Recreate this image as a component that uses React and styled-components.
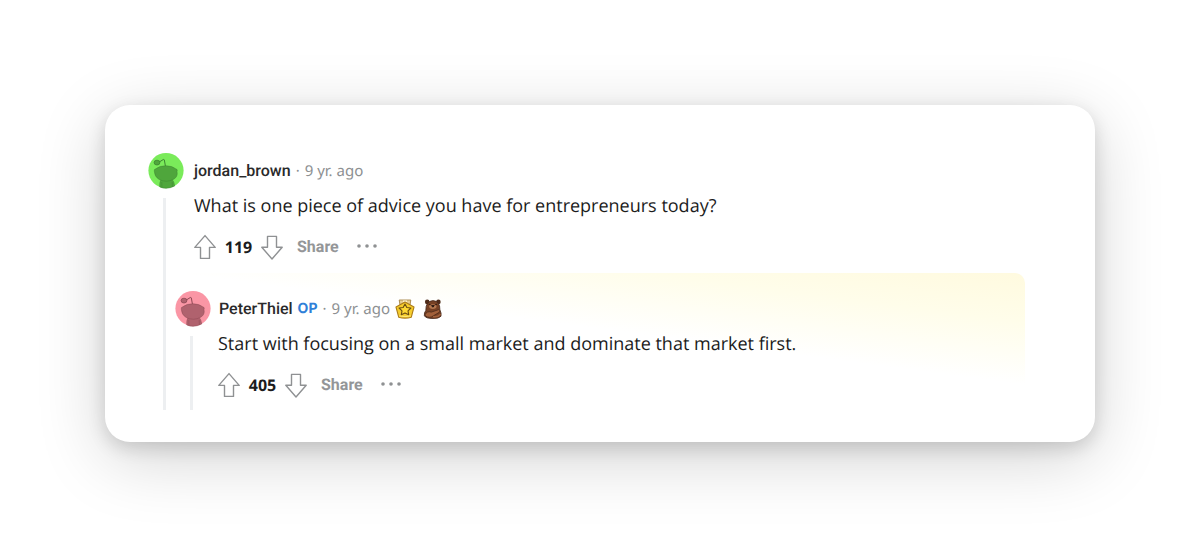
import React from 'react';
import styled, { createGlobalStyle } from 'styled-components';

const GlobalStyle = createGlobalStyle`
  * {
    box-sizing: border-box;
  }

  body {
    margin: 0;
    background-color: #fff;
    font-family: "Open Sans", "Noto Sans", sans-serif;
    text-rendering: geometricPrecision;
  }

  button {
    text-rendering: inherit;
  }
`;

const Page = styled.main`
  padding: 105px;
`;

const Card = styled.section`
  padding: 48px 70px 32px 43px;
  border-radius: 25px;
  background-color: #fff;
  box-shadow: 0 16px 68px rgba(0, 0, 0, 0.18), 0 6px 18px rgba(0, 0, 0, 0.14);
`;

const CommentBox = styled.article`
  ${({ $highlighted }) => $highlighted && `
    margin-top: 10px;
    padding-top: 18px;
    border-radius: 0 10px 0 0;
    background: linear-gradient(to top right, rgba(255, 255, 255, 0) 50%, #fffdea 78%, #fffadf) no-repeat;
    background-size: 100% 112px;
  `}
`;

const CommentHeader = styled.header`
  display: flex;
  align-items: center;
  gap: ${({ $nested }) => ($nested ? '8px' : '10px')};
`;

const Avatar = styled.svg`
  flex: none;
  width: 36px;
  height: 36px;
`;

const Meta = styled.div`
  display: flex;
  align-items: center;
  gap: 5px;
  font-family: "Noto Sans", sans-serif;
  font-size: 15px;
  line-height: 20px;
  color: #8d9092;
`;

const Username = styled.a`
  font-family: "Roboto", sans-serif;
  font-size: 16px;
  font-weight: 500;
  color: #2a2a2b;
  text-decoration: none;
`;

const OpTag = styled.span`
  font-family: "Inter", sans-serif;
  font-size: 14px;
  font-weight: 700;
  color: #2f80d8;
`;

const Award = styled.svg`
  width: 20px;
  height: 20px;
  margin-right: 3px;
`;

const CommentBody = styled.div`
  display: flex;
`;

const Rail = styled.div`
  flex: none;
  width: 27px;
  padding: 9px 0 0 15px;

  &::before {
    content: '';
    display: block;
    width: 3px;
    height: 100%;
    background-color: #edeff1;
  }
`;

const Content = styled.div`
  flex: 1;
  min-width: 0;
`;

const Inset = styled.div`
  padding: 4px 0 0 ${({ $nested }) => ($nested ? '16px' : '19px')};
`;

const Text = styled.p`
  margin: 0;
  font-size: 18px;
  line-height: 26px;
  color: #1c1c1c;
`;

const Actions = styled.div`
  display: flex;
  align-items: center;
  height: 32px;
  margin-top: 12px;
  margin-bottom: ${({ $nested }) => ($nested ? '9px' : '0')};
`;

const VoteButton = styled.button`
  display: flex;
  padding: 0;
  border: 0;
  background: none;
  color: #8f9193;
  cursor: pointer;

  svg {
    width: 22px;
    height: 26px;
  }
`;

const Score = styled.span`
  min-width: 45px;
  font-family: "Noto Sans", sans-serif;
  font-size: 16px;
  font-weight: 700;
  line-height: 20px;
  text-align: center;
  color: #1c1c1c;
`;

const ShareButton = styled.button`
  margin-left: 14px;
  padding: 0;
  border: 0;
  background: none;
  font-family: "Roboto", sans-serif;
  font-size: 16px;
  font-weight: 700;
  line-height: 20px;
  color: #949698;
  cursor: pointer;
`;

const MoreButton = styled(VoteButton)`
  margin-left: 18px;

  svg {
    width: 20px;
    height: 20px;
  }
`;

const avatarColors = {
  green: { back: '#7aeb5a', body: '#4fa63c', line: '#3c8430' },
  pink: { back: '#fa96a5', body: '#b0626e', line: '#8c4853' },
};

const Snoo = ({ tone }) => {
  const { back, body, line } = avatarColors[tone];
  return (
    <Avatar viewBox="0 0 36 36" aria-hidden="true">
      <circle cx="18" cy="17.6" r="17.6" fill={back} />
      <path d="M17.4 13 L16.3 6.8 Q16 6.2 15.2 6.6 L11 9.2" fill="none" stroke={line} strokeWidth="1" />
      <ellipse cx="9" cy="9.6" rx="2.9" ry="2.4" fill={body} stroke={line} strokeWidth="0.8" />
      <path d="M13 26.5 Q18 28.5 24 26.2 Q26.2 28.5 26.7 33 Q18.5 37 11.8 34 Q11.3 29.5 13 26.5Z" fill={body} stroke={line} strokeWidth="0.5" />
      <path d="M13.8 29 L13.9 34.5 M24.2 29 L24.4 34" stroke={line} strokeWidth="0.5" />
      <path d="M6.3 18.2 Q5.8 16.2 7.8 15.8 Q11.5 12.7 18 12.8 Q24.3 12.9 27.6 15.7 Q30 16.2 29 18.6 Q30.1 23.8 25.7 26.2 Q18.5 30.2 10.7 26.3 Q6.6 23.6 6.3 18.2Z" fill={body} stroke={line} strokeWidth="0.5" />
    </Avatar>
  );
};

const StarAward = () => (
  <Award viewBox="0 0 20 20" role="img" aria-label="Star award">
    <path d="M4.2 1 H15.8 L15 6 H5Z" fill="#e8cf94" stroke="#a58346" strokeWidth="0.9" />
    <path d="M8 2.2 H12" stroke="#fff6d8" strokeWidth="1.4" />
    <path d="M10 3 L19 8 L16.3 18.2 Q10 20 3.7 18.2 L1 8Z" fill="#f6cd2c" stroke="#ac7c19" strokeWidth="1.1" strokeLinejoin="round" />
    <path d="M4.4 16.8 Q10 18.5 15.6 16.8" fill="none" stroke="#ffe97c" strokeWidth="1" />
    <path d="M10 5 L11.8 8.5 L15.9 9 L13 11.8 L13.7 15.7 L10 13.9 L6.3 15.7 L7 11.8 L4.1 9 L8.2 8.5Z" fill="#ffd934" stroke="#6b4d13" strokeWidth="1.1" strokeLinejoin="round" />
  </Award>
);

const BearAward = () => (
  <Award viewBox="0 0 20 20" role="img" aria-label="Bear hug award">
    <circle cx="4.2" cy="2.9" r="2.3" fill="#4e2b1a" />
    <circle cx="15.4" cy="2.9" r="2.3" fill="#4e2b1a" />
    <path d="M2.8 11.5 Q2.6 2 10 1.6 Q17.2 2 16.9 11 Q18.8 14.5 18 17.2 Q16 19.6 10 19.5 Q3 19.6 1.4 16.8 Q0.9 13.7 2.8 11.5Z" fill="#774124" stroke="#44271a" strokeWidth="0.8" />
    <ellipse cx="9.8" cy="7.6" rx="3.7" ry="2.4" fill="#b37850" />
    <path d="M8.5 6.6 H11.3 L9.9 8.2Z M5.7 5.2 L7.6 5.7 M12.2 5.7 L14.2 5.2" fill="#281610" stroke="#281610" strokeWidth="0.9" />
    <path d="M1.8 16 Q3.9 11.6 8.3 13.1 L15.8 10.6 Q18.2 11.7 16.3 13.3 L8.6 17.9 Q4 19.2 1.8 16Z" fill="#a2603a" stroke="#482718" strokeWidth="0.8" />
    <path d="M10 17.5 Q14.3 18.7 17.6 15.2" fill="none" stroke="#a2603a" strokeWidth="1.6" />
  </Award>
);

const Arrow = ({ down }) => (
  <svg viewBox="0 0 22 26" aria-hidden="true">
    <path
      d={down
        ? 'M6.5 2.4 H15.5 V13.2 H21.2 L11 25 L0.8 13.2 H6.5Z'
        : 'M11 1.6 L21.2 13.4 H15.5 V24.4 H6.5 V13.4 H0.8Z'}
      fill="none"
      stroke="currentColor"
      strokeWidth="1.4"
      strokeLinejoin="round"
    />
  </svg>
);

const Dots = () => (
  <svg viewBox="0 0 20 20" fill="currentColor" aria-hidden="true">
    <circle cx="2" cy="9" r="1.8" />
    <circle cx="10" cy="9" r="1.8" />
    <circle cx="18" cy="9" r="1.8" />
  </svg>
);

const Comment = ({ author, tone, age, text, score, nested, children }) => (
  <CommentBox $highlighted={nested}>
    <CommentHeader $nested={nested}>
      <Snoo tone={tone} />
      <Meta>
        <Username href="#">{author}</Username>
        {nested && <OpTag>OP</OpTag>}
        <span>·</span>
        <span>{age}</span>
        {nested && <StarAward />}
        {nested && <BearAward />}
      </Meta>
    </CommentHeader>
    <CommentBody>
      <Rail />
      <Content>
        <Inset $nested={nested}>
          <Text>{text}</Text>
          <Actions $nested={nested}>
            <VoteButton aria-label="Upvote"><Arrow /></VoteButton>
            <Score>{score}</Score>
            <VoteButton aria-label="Downvote"><Arrow down /></VoteButton>
            <ShareButton>Share</ShareButton>
            <MoreButton aria-label="More options"><Dots /></MoreButton>
          </Actions>
        </Inset>
        {children}
      </Content>
    </CommentBody>
  </CommentBox>
);

const App = () => {
  return (
    <>
      <GlobalStyle />
      <Page>
        <Card>
          <Comment
            author="jordan_brown"
            tone="green"
            age="9 yr. ago"
            text="What is one piece of advice you have for entrepreneurs today?"
            score="119"
          >
            <Comment
              nested
              author="PeterThiel"
              tone="pink"
              age="9 yr. ago"
              text="Start with focusing on a small market and dominate that market first."
              score="405"
            />
          </Comment>
        </Card>
      </Page>
    </>
  );
};

export default App;
